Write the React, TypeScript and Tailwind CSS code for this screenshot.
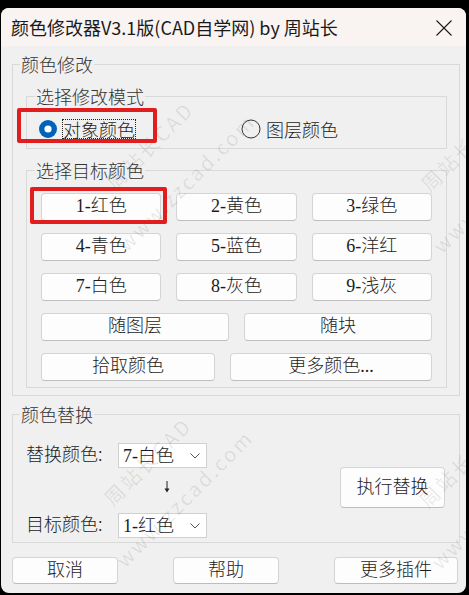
import React from "react";

const sans = "font-['Noto_Sans_CJK_SC',sans-serif]";
const btnFont = "font-['Liberation_Serif','Noto_Sans_CJK_SC',serif] font-light";

function Btn({ label, className = "" }: { label: string; className?: string }) {
  return (
    <div
      className={`flex items-center justify-center rounded-[4px] border border-[#d4d4d4] border-b-[#bdbdbd] bg-[#fdfdfd] text-[18px] leading-[18px] text-[#1c1c1c] ${btnFont} ${className}`}
    >
      <span className="-mt-[2px]">{label}</span>
    </div>
  );
}

function Legend({ text, ml }: { text: string; ml: string }) {
  return (
    <legend className={`${ml} px-[1px] text-[18px] font-light leading-[18px] text-[#333] ${sans}`}>{text}</legend>
  );
}

function Select({ value }: { value: string }) {
  return (
    <div className="flex h-[25px] w-[89px] items-center justify-between border border-[#d0d0d0] bg-white pl-[4px] pr-[6px]">
      <span className={`text-[18px] leading-[18px] text-[#1c1c1c] ${btnFont}`}>{value}</span>
      <svg width="10" height="6" viewBox="0 0 10 6" className="mt-[1px]">
        <path d="M0.5 0.5 L5 5 L9.5 0.5" fill="none" stroke="#555" strokeWidth="1" />
      </svg>
    </div>
  );
}

function Watermark({ pos }: { pos: string }) {
  return (
    <div className={`pointer-events-none absolute h-0 w-0 ${pos}`}>
      <div
        className={`absolute flex -translate-x-1/2 -translate-y-1/2 -rotate-45 flex-col items-center whitespace-nowrap text-[20px] leading-[52px] tracking-[2.5px] text-black/[0.09] ${sans}`}
      >
        <span>周站长CAD</span>
        <span>www.zzcad.com</span>
      </div>
    </div>
  );
}

export default function App() {
  return (
    <div className="h-[595px] w-[469px] overflow-hidden bg-black pl-[1px] pt-[8px]">
      <div className="relative h-[585px] w-[465px] overflow-hidden rounded-[8px] bg-[#f0f0f0]">
        {/* Title bar */}
        <div className="flex h-[38px] items-center justify-between bg-[#f9f3f2] pl-[10px] pr-[14px]">
          <span className={`text-[18px] leading-[26px] text-[#1a1a1a] ${sans}`}>
            颜色修改器V3.1版(CAD自学网) by 周站长
          </span>
          <svg width="16" height="16" viewBox="0 0 16 16" className="mt-[2px]">
            <path d="M0.5 0.5 L15.5 15.5 M15.5 0.5 L0.5 15.5" stroke="#1a1a1a" strokeWidth="1.1" />
          </svg>
        </div>

        {/* Body */}
        <div className="pl-[11px] pt-[9px]">
          <fieldset className="w-[448px] border border-[#d9d9d9]">
            <Legend text="颜色修改" ml="ml-[7px]" />
            <div className="pl-[13px] pt-[14px] pb-[7px]">
              <fieldset className="w-[421px] border border-[#d9d9d9]">
                <Legend text="选择修改模式" ml="ml-[8px]" />
                <div className="flex h-[20px] items-center pl-[12px] mt-[14px] mb-[9px]">
                  <svg width="18" height="18" viewBox="0 0 18 18">
                    <circle cx="9" cy="9" r="9" fill="#0063b9" />
                    <circle cx="9" cy="9" r="3.6" fill="#ffffff" />
                  </svg>
                  <span
                    className={`ml-[6px] text-[18px] font-light leading-[18px] text-[#1c1c1c] outline outline-1 outline-offset-[0px] outline-dotted outline-[#222] ${sans}`}
                  >
                    对象颜色
                  </span>
                  <svg width="20" height="20" viewBox="0 0 20 20" className="ml-[106px]">
                    <circle cx="10" cy="10" r="9" fill="none" stroke="#333" strokeWidth="1" />
                  </svg>
                  <span className={`ml-[5px] text-[18px] font-light leading-[18px] text-[#1c1c1c] ${sans}`}>图层颜色</span>
                </div>
              </fieldset>

              <fieldset className="mt-[12px] w-[421px] border border-[#d9d9d9]">
                <Legend text="选择目标颜色" ml="ml-[8px]" />
                <div className="flex flex-col gap-[12px] px-[14px] pt-[14px] pb-[6px]">
                  <div className="grid h-[28px] grid-cols-3 gap-x-[15px]">
                    <Btn label="1-红色" />
                    <Btn label="2-黄色" />
                    <Btn label="3-绿色" />
                  </div>
                  <div className="grid h-[28px] grid-cols-3 gap-x-[15px]">
                    <Btn label="4-青色" />
                    <Btn label="5-蓝色" />
                    <Btn label="6-洋红" />
                  </div>
                  <div className="grid h-[28px] grid-cols-3 gap-x-[15px]">
                    <Btn label="7-白色" />
                    <Btn label="8-灰色" />
                    <Btn label="9-浅灰" />
                  </div>
                  <div className="grid h-[28px] grid-cols-2 gap-x-[15px]">
                    <Btn label="随图层" />
                    <Btn label="随块" />
                  </div>
                  <div className="flex h-[28px] gap-x-[15px]">
                    <Btn label="拾取颜色" className="w-[174px]" />
                    <Btn label="更多颜色..." className="w-[202px]" />
                  </div>
                </div>
              </fieldset>
            </div>
          </fieldset>

          <fieldset className="mt-[9px] w-[448px] border border-[#d9d9d9]">
            <Legend text="颜色替换" ml="ml-[7px]" />
            <div className="flex items-start justify-between pl-[13px] pr-[14px] pt-[20px] pb-[4px]">
              <div className="flex flex-col">
                <div className="flex h-[25px] items-center">
                  <span className={`w-[92px] -mt-[5px] text-[18px] font-light leading-[18px] text-[#1c1c1c] ${sans}`}>替换颜色:</span>
                  <Select value="7-白色" />
                </div>
                <div className="h-[45px] pl-[137px] pt-[13px]">
                  <svg width="8" height="12" viewBox="0 0 8 12">
                    <path d="M4 0 L4 10" stroke="#222" strokeWidth="1" />
                    <path d="M1.5 7.5 L4 11.5 L6.5 7.5 Z" fill="#222" />
                  </svg>
                </div>
                <div className="flex h-[25px] items-center">
                  <span className={`w-[92px] -mt-[5px] text-[18px] font-light leading-[18px] text-[#1c1c1c] ${sans}`}>目标颜色:</span>
                  <Select value="1-红色" />
                </div>
              </div>
              <Btn label="执行替换" className="mt-[24px] h-[41px] w-[105px]" />
            </div>
          </fieldset>

          <div className="mt-[14px] flex h-[27px] gap-[55px]">
            <Btn label="取消" className="w-[106px]" />
            <Btn label="帮助" className="w-[106px]" />
            <Btn label="更多插件" className="w-[124px]" />
          </div>
        </div>

        {/* Watermarks */}
        <Watermark pos="left-[167px] top-[156px]" />
        <Watermark pos="left-[165px] top-[472px]" />
        <Watermark pos="left-[482px] top-[158px]" />
        <Watermark pos="left-[480px] top-[474px]" />

        {/* Red annotation rectangles */}
        <div className="pointer-events-none absolute left-[16px] top-[100px] h-[35px] w-[140px] rounded-[2px] border-[4px] border-[#e11d1d]" />
        <div className="pointer-events-none absolute left-[29px] top-[179px] h-[37px] w-[137px] rounded-[2px] border-[4px] border-[#e11d1d]" />
      </div>
    </div>
  );
}
